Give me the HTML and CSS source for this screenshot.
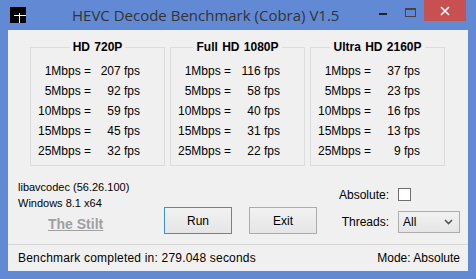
FILE: index.html
```html
<!DOCTYPE html>
<html lang="en">
<head>
<meta charset="UTF-8">
<title>HEVC Decode Benchmark (Cobra) V1.5</title>
<link rel="stylesheet" href="styles.css">
</head>
<body>
<div class="window">
    <div class="titlebar">
        <svg class="app-icon" width="16" height="16" viewBox="0 0 16 16">
            <rect width="16" height="16" fill="#000"/>
            <rect x="9" y="6" width="1" height="10" fill="#fff"/>
            <rect x="4" y="8" width="12" height="1" fill="#fff"/>
        </svg>
        <div class="title">HEVC Decode Benchmark (Cobra) V1.5</div>
        <div class="caption">
            <span class="btn-min"></span>
            <span class="btn-max"></span>
            <span class="btn-close">
                <svg width="10" height="10" viewBox="0 0 10 10">
                    <path d="M1 1 L9 9 M9 1 L1 9" stroke="#fff" stroke-width="1.6"/>
                </svg>
            </span>
        </div>
    </div>

    <div class="client">
        <div class="groups">
            <div class="group">
                <div class="group-head"><span>HD 720P</span></div>
                <div class="group-body">
                    <span>1Mbps =</span><span>207 fps</span>
                    <span>5Mbps =</span><span>92 fps</span>
                    <span>10Mbps =</span><span>59 fps</span>
                    <span>15Mbps =</span><span>45 fps</span>
                    <span>25Mbps =</span><span>32 fps</span>
                </div>
            </div>
            <div class="group">
                <div class="group-head"><span>Full HD 1080P</span></div>
                <div class="group-body">
                    <span>1Mbps =</span><span>116 fps</span>
                    <span>5Mbps =</span><span>58 fps</span>
                    <span>10Mbps =</span><span>40 fps</span>
                    <span>15Mbps =</span><span>31 fps</span>
                    <span>25Mbps =</span><span>22 fps</span>
                </div>
            </div>
            <div class="group">
                <div class="group-head"><span>Ultra HD 2160P</span></div>
                <div class="group-body">
                    <span>1Mbps =</span><span>37 fps</span>
                    <span>5Mbps =</span><span>23 fps</span>
                    <span>10Mbps =</span><span>16 fps</span>
                    <span>15Mbps =</span><span>13 fps</span>
                    <span>25Mbps =</span><span>9 fps</span>
                </div>
            </div>
        </div>

        <div class="bottom">
            <div class="info">
                <div class="info-line">libavcodec (56.26.100)</div>
                <div class="info-line">Windows 8.1 x64</div>
                <a class="author" href="#">The Stilt</a>
            </div>
            <div class="buttons">
                <button class="btn btn-focus">Run</button>
                <button class="btn">Exit</button>
            </div>
            <div class="options">
                <span class="opt-label">Absolute:</span>
                <span class="checkbox"></span>
                <span class="opt-label">Threads:</span>
                <div class="select">
                    <span>All</span>
                    <svg width="9" height="6" viewBox="0 0 9 6">
                        <path d="M1 1 L4.5 4.5 L8 1" fill="none" stroke="#555" stroke-width="1.6"/>
                    </svg>
                </div>
            </div>
        </div>

        <div class="statusbar">
            <span class="status-msg">Benchmark completed in: 279.048 seconds</span>
            <span>Mode: Absolute</span>
        </div>
    </div>
</div>
</body>
</html>
```

FILE: styles.css
```css
body {
    margin: 0;
    padding: 0;
    background-color: #628ad4;
    font-family: "Liberation Sans", Arial, sans-serif;
}

.window {
    width: 476px;
    height: 279px;
    box-sizing: border-box;
    padding: 0 8px 8px;
    background-color: #628ad4;
    display: flex;
    flex-direction: column;
}

/* barre de titre */
.titlebar {
    height: 30px;
    display: flex;
    align-items: flex-start;
}

.app-icon {
    margin: 7px 0 0 2px;
}

.title {
    flex: 1;
    margin-left: 46px;
    font-family: "Open Sans", "Noto Sans", sans-serif;
    font-size: 15px;
    line-height: 30px;
    color: #333;
}

.caption {
    display: flex;
    align-items: flex-start;
}

.btn-min {
    width: 8px;
    height: 2px;
    margin-top: 13px;
    background-color: #222;
}

.btn-max {
    width: 9px;
    height: 6px;
    margin: 8px 0 0 18px;
    border: 1px solid #444;
    border-top-width: 2px;
}

.btn-close {
    width: 42px;
    height: 21px;
    margin: 0 2px 0 8px;
    background-color: #c75050;
    display: flex;
    justify-content: center;
    align-items: center;
}

/* zone client */
.client {
    height: 241px;
    background-color: #f0f0f0;
    display: flex;
    flex-direction: column;
    font-size: 12px;
    color: #000;
}

.groups {
    display: flex;
    gap: 5px;
    padding: 10px 0 0 22px;
}

.group {
    width: 135px;
}

.group-head {
    height: 15px;
    display: flex;
    font-weight: bold;
    line-height: 15px;
    word-spacing: 1px;
}

.group-head span {
    padding: 0 3px;
}

.group-head::before,
.group-head::after {
    content: "";
    flex: 1;
    height: 7px;
    align-self: flex-end;
    border-top: 1px solid #dcdcdc;
}

.group-head::before {
    border-left: 1px solid #dcdcdc;
}

.group-head::after {
    border-right: 1px solid #dcdcdc;
}

.group-body {
    display: grid;
    grid-template-columns: 60px 49px;
    grid-auto-rows: 20px;
    align-items: center;
    text-align: right;
    padding: 6px 0 4px;
    border: 1px solid #dcdcdc;
    border-top: none;
}

/* partie basse */
.bottom {
    height: 78px;
    display: flex;
    align-items: flex-start;
}

.info {
    width: 146px;
    padding: 13px 0 0 10px;
    display: flex;
    flex-direction: column;
    font-size: 11px;
}

.info-line {
    line-height: 16px;
}

.author {
    margin: 4px 0 0 30px;
    font-size: 14px;
    font-weight: bold;
    line-height: 18px;
    color: #a0a0a0;
}

.buttons {
    display: flex;
    gap: 17px;
    margin-top: 41px;
}

.btn {
    width: 68px;
    height: 27px;
    padding: 0;
    font-family: inherit;
    font-size: 12px;
    color: #000;
    border: 1px solid #acacac;
    background: linear-gradient(#f2f2f2, #e5e5e5);
}

.btn-focus {
    border-color: #3c8ee0;
}

.options {
    display: grid;
    grid-template-columns: 51px auto;
    grid-template-rows: 13px 22px;
    column-gap: 9px;
    row-gap: 10px;
    align-items: center;
    margin: 22px 0 0 21px;
}

.opt-label {
    text-align: right;
}

.checkbox {
    width: 11px;
    height: 11px;
    border: 1px solid #707070;
    background-color: #fff;
}

.select {
    width: 50px;
    height: 20px;
    border: 1px solid #acacac;
    background: linear-gradient(#f2f2f2, #e5e5e5);
    display: flex;
    align-items: center;
    justify-content: space-between;
    padding: 0 6px 0 4px;
}

/* barre d'etat */
.statusbar {
    height: 26px;
    border-top: 1px solid #d7d7d7;
    display: flex;
    justify-content: space-between;
    align-items: center;
    padding: 0 8px 0 10px;
}

.status-msg {
    letter-spacing: 0.2px;
}
```
